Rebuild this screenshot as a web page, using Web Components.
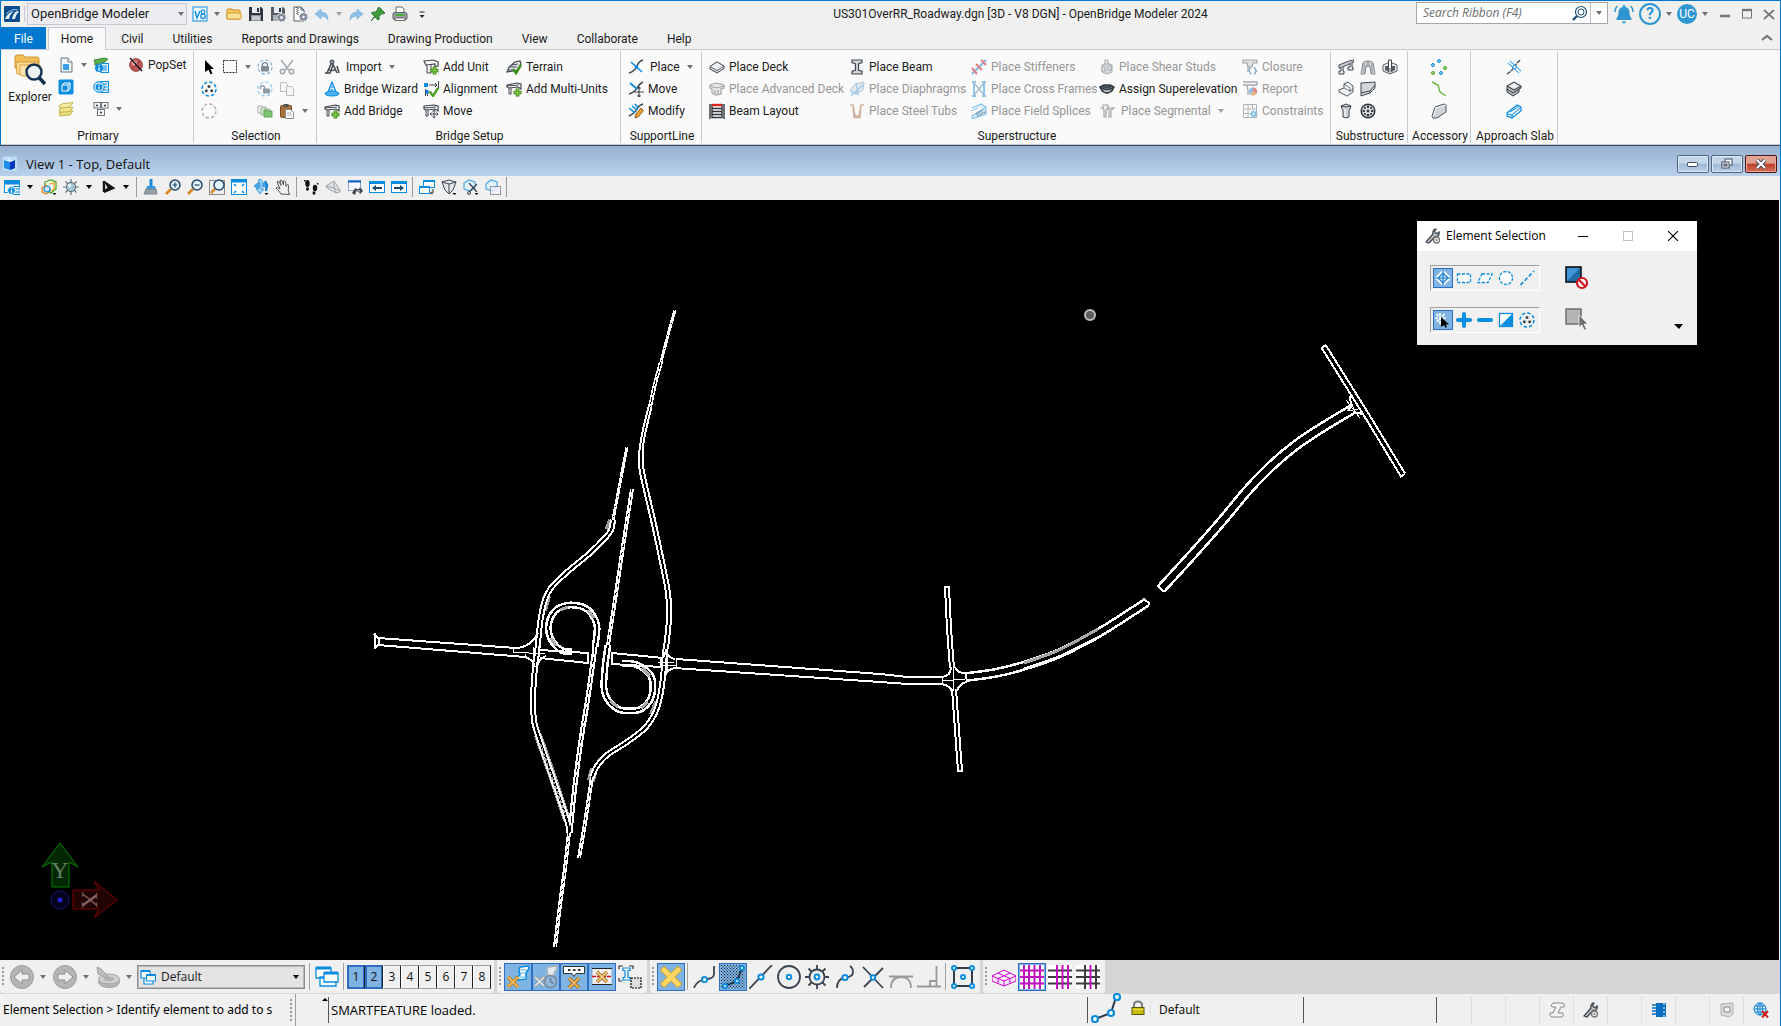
<!DOCTYPE html>
<html lang="en">
<head>
<meta charset="utf-8">
<title>OpenBridge Modeler</title>
<style>
  html, body {
    margin: 0;
    height: 100%;
    overflow: hidden;
    background: #f0f0f0;
    color: #1a1a1a;
    font-family: Roboto, "Open Sans", sans-serif;
    font-size: 12px;
    line-height: 16px;
  }
</style>
</head>
<body>
<bridge-app></bridge-app>

<script>
// icon markup by name, drawn on a square grid as large as the size asked for
const ICONS = {
  // ---- title bar ----
  logo: '<rect width="16" height="16" rx="1" fill="#0b4d8c"/><path d="M1 13Q4 6 10 5Q6 8 5 13M8 13Q9 7 13 5l2 1Q12 8 11 13" fill="#fff" opacity=".9"/><path d="M2 8Q8 2 14 4" stroke="#8cc6f0" fill="none"/>',
  v8: '<rect x="1" y="1" width="14" height="14" fill="#f4faff" stroke="#0a8ce0"/><path d="M3 5l2 7 3-7" fill="none" stroke="#0a8ce0" stroke-width="1.4"/><circle cx="11" cy="6" r="1.8" fill="none" stroke="#0a8ce0" stroke-width="1.2"/><circle cx="11" cy="10.3" r="2.3" fill="none" stroke="#0a8ce0" stroke-width="1.2"/>',
  folder: '<path d="M1 13V4q0-1 1-1h4l1 1h6q1 0 1 1v8z" fill="#f5c862" stroke="#c98a1c"/><path d="M1 13V7h14v5q0 1-1 1z" fill="#ffe09a" stroke="#d79a2b"/>',
  save: '<path d="M1 1h12l2 2v12H1z" fill="#2f353c"/><path d="M4 1h8v6H4z" fill="#e8ecf0"/><path d="M9 2h2v4H9z" fill="#2f353c"/><path d="M3 9h10v6H3z" fill="#8c949c"/><path d="M4 11h8M4 13h8" stroke="#fff"/>',
  saveset: '<path d="M1 1h12l2 2v12H1z" fill="#555c64"/><path d="M4 1h8v6H4z" fill="#e8ecf0"/><path d="M9 2h2v4H9z" fill="#2f353c"/><path d="M3 9h5v6H3z" fill="#a9b0b8"/><circle cx="11.5" cy="11.5" r="4.5" fill="#f0f0f0"/><circle cx="11.5" cy="11.5" r="2.6" fill="#eef" stroke="#7a8696" stroke-width="2"/><circle cx="11.5" cy="11.5" r="4" fill="none" stroke="#7a8696" stroke-dasharray="1.6 1.5"/>',
  docset: '<path d="M2 1h7l3 3v11H2z" fill="#fff" stroke="#555c64"/><path d="M5 1v8M6 2v8" stroke="#333" stroke-dasharray="1 1"/><path d="M9 1v3h3" fill="none" stroke="#555c64"/><circle cx="11.5" cy="11" r="4.5" fill="#f0f0f0"/><circle cx="11.5" cy="11" r="2.4" fill="#eef" stroke="#7a8696" stroke-width="2"/><circle cx="11.5" cy="11" r="4" fill="none" stroke="#7a8696" stroke-dasharray="1.6 1.5"/>',
  undo: '<path d="M1 8l6-5v3q7 0 7 8-2-4-7-4v3z" fill="#8cc0e6" stroke="#75aeda" stroke-width=".6"/>',
  redo: '<path d="M15 8L9 3v3q-7 0-7 8 2-4 7-4v3z" fill="#8cc0e6" stroke="#75aeda" stroke-width=".6"/>',
  pin: '<path d="M9 1l6 6-2 1-1-.5-3 3 .3 2.5-1.3 1-3-3-4 4 3.500-4.700-3-3 1-1.300 2.500.3 3-3-.5-1z" fill="#3d9a3d" stroke="#1e6b26" stroke-width=".8"/>',
  print: '<path d="M4 1h6l2 2v4H4z" fill="#fff" stroke="#666"/><rect x="1" y="6.500" width="14" height="7" rx="1.500" fill="#9aa1a8" stroke="#5c636a"/><rect x="3.500" y="8" width="9" height="2" fill="#4cae3a"/><path d="M3 12h10v2.500H3z" fill="#fff" stroke="#666"/>',
  customize: '<path d="M5.500 6h5" stroke="#222"/><path d="M5.500 9h5l-2.500 3z" fill="#222"/>',
  // ---- primary ----
  explorer: '<path d="M1 14V3q0-2 2-2h6l2 2h12q2 0 2 2v10z" fill="#f2bf58" stroke="#cf9430"/><path d="M2 8h22l-2 12H3z" fill="#fbdc96" stroke="#d79d3a"/><path d="M6 11h20v9q0 2-2 2H8q-2 0-2-2z" fill="#fde5ae" stroke="#d79d3a"/><circle cx="20" cy="18" r="7.500" fill="#e9f4fb" fill-opacity=".9" stroke="#12304f" stroke-width="2.400"/><path d="M25 23.500l6 6.500" stroke="#12304f" stroke-width="3.600"/>',
  doc: '<path d="M3 1h7l4 4v10H3z" fill="#eef4f9" stroke="#6d7780"/><path d="M10 1v4h4" fill="#fff" stroke="#6d7780"/><rect x="5" y="7" width="6" height="6" fill="#3aa0e6"/>',
  model: '<rect x=".5" y=".5" width="15" height="15" rx="1.500" fill="#0a8ce0"/><path d="M4 6h6v6H4zM4 6l2-2h6v6l-2 2M10 6l2-2" fill="none" stroke="#fff"/>',
  layers: '<path d="M1 12l4-3 10 1-3 4-10 1z" fill="#e9dc7c" stroke="#b5a640" stroke-width=".8"/><path d="M1 8.500l4-3 10 1-3 4-10 .8z" fill="#efe48c" stroke="#b5a640" stroke-width=".8"/><path d="M1 5l4-2.500 10-1-3 4.500-10 1z" fill="#f6eea4" stroke="#b5a640" stroke-width=".8"/>',
  levels: '<path d="M1 3l10-2 4 1-3 3-10 2z" fill="#57b04a" stroke="#33802a" stroke-width=".8"/><path d="M1 8l6-1" stroke="#33802a"/><rect x="8" y="6.500" width="7.500" height="9" fill="#e6f3fc" stroke="#0a8ce0"/><path d="M10 9h4M10 11h4M10 13h4" stroke="#0a8ce0"/><circle cx="6" cy="11" r="4" fill="#0a8ce0"/><path d="M6 10.500v3.500M6 8v1.300" stroke="#fff" stroke-width="1.300"/>',
  props: '<rect x="8" y="2.500" width="7.500" height="11" fill="#e6f3fc" stroke="#0a8ce0"/><path d="M10.500 5h4M10.500 8h4M10.500 11h4" stroke="#0a8ce0"/><circle cx="6" cy="8" r="5.300" fill="#bfe0f7" stroke="#0a8ce0"/><circle cx="6" cy="8" r="3.200" fill="#0a8ce0"/><path d="M6 7.500v3M6 5.300v1.200" stroke="#fff" stroke-width="1.300"/>',
  keys: '<g fill="#f7f7f7" stroke="#6d7780"><rect x="1" y="1.500" width="6.500" height="5.500"/><rect x="8.500" y="1.500" width="6.500" height="5.500"/><rect x="4.500" y="8.500" width="7" height="6"/></g><path d="M3 4.500h2M11 4.500h2M7 11.500h2" stroke="#333" stroke-width="1.500"/>',
  popset: '<circle cx="8" cy="8" r="6.300" fill="#c25a5a" stroke="#8d3434"/><circle cx="6.500" cy="6" r="2.600" fill="#e9a8a4"/><path d="M2 1l12 13" stroke="#111" stroke-width="1.300"/><path d="M4 12l8-8" stroke="#712" stroke-width=".8"/>',
  // ---- selection ----
  pointer: '<path d="M4 1l9 9H9.500l2 4.500-2 .8-2-4.600L4 13z" fill="#000"/>',
  marquee: '<rect x="1.500" y="1.500" width="13" height="12" fill="none" stroke="#222" stroke-dasharray="2 1"/>',
  lock: '<circle cx="8" cy="8" r="7" fill="none" stroke="#7fb2d4" stroke-width="1.200" stroke-dasharray="3.400 2.100"/><rect x="4" y="7" width="8" height="5.500" rx="1" fill="#7f8d99"/><path d="M5.500 7V5q2.500-3 5 0v2" fill="none" stroke="#7f8d99" stroke-width="1.400"/>',
  unlock: '<circle cx="8" cy="8" r="7" fill="none" stroke="#8cc8ef" stroke-width="1.200" stroke-dasharray="3.400 2.100"/><rect x="6" y="7.500" width="7" height="5" rx="1" fill="#8d99a3"/><path d="M3.500 8V6q2-3 4 0v2" fill="none" stroke="#8d99a3" stroke-width="1.400"/>',
  circledots: '<circle cx="8" cy="8" r="7" fill="none" stroke="#0a8ce0" stroke-width="1.500" stroke-dasharray="3.400 2.100"/><g fill="#3f4750"><circle cx="8" cy="5.500" r="1.500"/><circle cx="5.300" cy="9.700" r="1.500"/><circle cx="10.700" cy="9.700" r="1.500"/></g>',
  circledash: '<circle cx="8" cy="8" r="7" fill="none" stroke="#a4adb5" stroke-width="1.300" stroke-dasharray="3.400 2.100"/>',
  cut: '<g fill="none" stroke="#a3a9ae" stroke-width="1.500"><path d="M2 1l8.500 11M14 1L5.500 12"/><circle cx="3.500" cy="12.500" r="2.200"/><circle cx="12.500" cy="12.500" r="2.200"/></g>',
  copy: '<g fill="#f6f6f6" stroke="#b7bcc1"><path d="M1.500 1.500h5l2 2v7h-7z"/><path d="M7.500 5.500h5l2 2v7h-7z"/></g>',
  cascade: '<path d="M1 3h4l1 1h3v6H1z" fill="#f2f2f2" stroke="#a9b0a9"/><path d="M4 5h4l1 1h4v6H4z" fill="#cfe8cb" stroke="#9bb79a"/><path d="M7 7h3l1 1h4v6H7z" fill="#7cc46f" stroke="#69a35f"/>',
  paste: '<rect x="1.500" y="2.500" width="11" height="12" rx="1" fill="#a9713a" stroke="#7b4f25"/><rect x="4.500" y="1" width="5" height="3" fill="#555"/><path d="M6.500 6.500h5l3 3v6h-8z" fill="#fff" stroke="#8a8a8a"/><path d="M8 10h4M8 12h5" stroke="#aaa"/>',
  // ---- bridge setup ----
  import: '<g fill="none" stroke="#3f4750" stroke-width="1.500"><path d="M8 3L3 14M8 3l5 11M4 10q4 3 8 0"/><path d="M1 14h5L9 6M15 14l-2-7"/></g><circle cx="8" cy="3" r="2" fill="#8c949c" stroke="#3f4750"/>',
  wizard: '<path d="M8 1l4 10H4z" fill="#cfe9fb" stroke="#0a8ce0" stroke-width="1.200"/><path d="M1 12q7-4 14 0 0 3-7 3t-7-3z" fill="#4fb0ef" stroke="#0a8ce0"/><path d="M8 5v2M6 9h3" stroke="#0a8ce0"/>',
  addunit: '<path d="M1 2l9-1 5 2v4l-3 .5V5L3 6z" fill="#fff" stroke="#3f4750" stroke-width="1.200"/><path d="M4 6v8h4V6" fill="#eee" stroke="#3f4750"/><path d="M11.500 7.500v8M7.500 11.500h8" stroke="#2e7a12" stroke-width="3.600"/><path d="M11.500 8v7M8 11.500h7" stroke="#7cc242" stroke-width="2"/>',
  addbridge: '<path d="M1 4l10-2 4 1v5l-3-2-9 1-2-1z" fill="#fff" stroke="#3f4750" stroke-width="1.200"/><path d="M1 5l12-1M3 7v6h2V7" fill="none" stroke="#3f4750"/><path d="M11.500 7.500v8M7.500 11.500h8" stroke="#2e7a12" stroke-width="3.600"/><path d="M11.500 8v7M8 11.500h7" stroke="#7cc242" stroke-width="2"/>',
  movebridge: '<path d="M1 3l10-1 4 1v5l-3-2-9 1-2-1z" fill="#fff" stroke="#3f4750" stroke-width="1.200"/><path d="M1 5l12-1M3 7v6h2V7" fill="none" stroke="#3f4750"/><path d="M11 7v8M7 11h8M9.500 8.500L11 7l1.500 1.500M9.500 13.500L11 15l1.500-1.500M8.500 9.500L7 11l1.500 1.500M13.500 9.500L15 11l-1.500 1.500" fill="none" stroke="#3f4750"/>',
  alignment: '<rect x="1" y="2" width="4" height="4" fill="#0a8ce0"/><path d="M6 4h8M12 2l2 2-2 2M15.500 0v8M2.500 8v7M4.500 15v-4h4" fill="none" stroke="#3f4750"/><rect x="3" y="9" width="2.500" height="4" fill="#0a8ce0"/><path d="M7 11l3 4 5-8" fill="none" stroke="#4fa524" stroke-width="2.400"/>',
  terrain: '<path d="M1 13l2-5 6-5 5-1 1 3-3 6z" fill="#e8eaec" stroke="#3f4750" stroke-width="1.200"/><path d="M3 8h8M2 11h7M6 6l6-1" stroke="#3f4750"/><path d="M7 10l3 4 5-8" fill="none" stroke="#3f8f1a" stroke-width="2.600"/>',
  // ---- support line ----
  sl: '<path d="M1 14q6-2 8-7t6-6" fill="none" stroke="#3f4750" stroke-width="1.500"/><path d="M3 3l11 10" stroke="#0a8ce0" stroke-width="1.600"/><circle cx="8.500" cy="8" r="1.800" fill="#0a8ce0"/>',
  slmove: '<path d="M1 13q6-2 8-6t6-6" fill="none" stroke="#3f4750" stroke-width="1.500"/><path d="M2 2l7 6" stroke="#0a8ce0" stroke-width="1.800"/><path d="M11 6v10M6 11h10M9.500 7.500L11 6l1.500 1.500M9.500 14.500L11 16l1.500-1.500" fill="none" stroke="#3f4750" stroke-width="1.100"/>',
  slmodify: '<path d="M1 13q6-3 8-7t6-5" fill="none" stroke="#3f4750" stroke-width="1.500"/><path d="M1 5l6 5M4 3l5 4M7 1l3 4" stroke="#0a8ce0" stroke-width="1.500"/><path d="M7 15l1-4 5-6 2.500 2.500-5 6z" fill="#eda33c" stroke="#8a5a1c"/>',
  // ---- superstructure ----
  deck: '<path d="M1 7.500L8 3l7 4v2.500L8 14l-7-4z" fill="#d8dbde" stroke="#3f4750"/><path d="M1 7.500L8 3l7 4-7 4.500z" fill="#f1f2f3" stroke="#3f4750" stroke-width=".8"/>',
  advdeck: '<path d="M1 4l6-2 8 2v3l-3 1v5l-5 1-4-2V8L1 7z" fill="#e8e8e8" stroke="#a0a5aa" stroke-width="1.200"/><path d="M1 5l7 2 7-2M6 9v4M9 9v4" stroke="#a0a5aa" stroke-width="1.200" fill="none"/>',
  beamlayout: '<path d="M1 1v15M15 1v15M3 1v14M13 1v14" stroke="#2f353c" stroke-width="1.400"/><path d="M3 2h10" stroke="#d22" stroke-width="2.400"/><path d="M3 5.500h10M3 8.500h10M3 11.500h10M3 14.500h10" stroke="#2f353c" stroke-width="1.700"/>',
  beam: '<path d="M3 1h10v2.500L9.500 5v6l3.500 1.500V15H3v-2.500L6.500 11V5L3 3.500z" fill="#d3d6d9" stroke="#3f4750" stroke-width="1.200"/>',
  diaphragm: '<path d="M1 9l5-6 9-2-1 8-6 3z" fill="#e3e8ec" stroke="#b8c4cf"/><path d="M2 15L15 3M1 11l9 3M7 2l2 11" stroke="#9cc9ea" stroke-width="1.200"/>',
  tubs: '<path d="M1 2h3l2 11h4l2-11h3M4 2l1 12.500h6L12 2" fill="none" stroke="#cfb3a0" stroke-width="1.500"/>',
  stiffeners: '<path d="M1 15L15 1" stroke="#7dbce8" stroke-width="2.200"/><path d="M1 9l5 6M5 5l6 6M10 1l5 5" stroke="#e27f7f" stroke-width="2"/>',
  crossframes: '<path d="M3 1v14M13 1v14M1 1h4M11 1h4M1 15h4M11 15h4" stroke="#8cc4ea" stroke-width="2"/><path d="M3 2l10 12M13 2L3 14" stroke="#9fb7c8" stroke-width="1.200"/>',
  splices: '<path d="M1 5l9-4 5 3M1 13L15 4v7L1 16z" fill="#d6ecf9" stroke="#8cc4ea" stroke-width="1.200"/><path d="M5 11l7-4M6 13l8-4" stroke="#6e8fa6" stroke-width="1.700" stroke-dasharray="1.500 1"/><path d="M0 8l7-3" stroke="#8cc4ea"/>',
  studs: '<path d="M3 6l5-2 5 2v7l-5 2-5-2z" fill="#d9dbdd" stroke="#a4a8ac"/><path d="M6 1h3v4H6zM3 8h3v4H3zM9 7h3v4H9z" fill="#eceded" stroke="#a4a8ac"/>',
  superelev: '<path d="M1 6l4-2h6l4 2-2 4-4 2H7l-4-2z" fill="#8b9299" stroke="#2f353c" stroke-width="1.400"/><path d="M1 6q7 5 14 0M4 6h8" stroke="#2f353c" fill="none" stroke-width="1.300"/><path d="M5 10h6" stroke="#dfe3e6"/>',
  segmental: '<path d="M1 5h3l1 2v7h2V7l2-2V2H4v3M9 5l1 2v7h2V7l3-2H9V2" fill="#f1f1f1" stroke="#9ca0a4" stroke-width="1.100"/>',
  closure: '<path d="M1 1h14v3h-4l-1 4H6L5 4H1zM6 8v5" fill="#ddd" stroke="#a4a8ac" stroke-width="1.200"/><path d="M9 9q-2 0-1.500 2L7 12l1 1q0 2 1.500 2M12 9q2 0 1.500 2l1 1-1 1q0 2-1.500 2" fill="none" stroke="#7fa9c6" stroke-width="1.300"/>',
  report: '<path d="M1 1h14v3M1 4h4l1 5M6 9v5M5 4h10" fill="none" stroke="#a4a8ac" stroke-width="1.300"/><circle cx="11" cy="10.500" r="4" fill="#8fbfe4"/><path d="M11 10.500v-4a4 4 0 0 1 3.500 6z" fill="#e88b7c"/><path d="M11 10.500l3.500 2a4 4 0 0 1-6 1z" fill="#f0b97a"/>',
  constraints: '<g fill="none" stroke="#b0b3b6"><path d="M1.500 1.500h13v13h-13zM6 1v14M10.500 1v5M1 6h14M1 10.500h6"/></g><path d="M11.500 7v8M7.500 11h8" stroke="#8cc4ea" stroke-width="1.400"/><rect x="9.500" y="9" width="4" height="4" fill="#bfe0f5" stroke="#7fb8de"/>',
  // ---- substructure ----
  pierline: '<path d="M1 6l10-4 5-1v2L2 9H1z" fill="#ccd0d3" stroke="#3f4750"/><path d="M3 8v4H1v3h5v-3H5V8M12 4v4h-2v3h5V8h-1V4" fill="#e3e5e7" stroke="#3f4750"/>',
  arch: '<path d="M1 15l2-11q1-2 5-2t5 2l2 11h-4l-1-8H6l-1 8z" fill="#d5d9dd" stroke="#7d868e"/><path d="M4 4v10M12 4v10M7 2v6M9 2v6" stroke="#7d868e" stroke-width=".8"/>',
  footing: '<path d="M1 6l7-3 7 3v6l-7 3-7-3z" fill="#e5e7e9" stroke="#5c646c"/><path d="M3 7h10v4l-5 3-5-3z" fill="#555d65"/><path d="M6.500 1h3v9h-3z" fill="#fff" stroke="#3f4750"/><path d="M8 10v4" stroke="#fff"/>',
  abutment: '<path d="M1 9l5-2V3l4-2 5 4v6l-6 4-8-4z" fill="#f4f5f6" stroke="#4d555d"/><path d="M6 7l6 3 3-2M6 3l6 4v4" fill="none" stroke="#4d555d" stroke-width=".8"/>',
  wingwall: '<path d="M1 2l14-1v6l-5 5-9 3z" fill="#d4d7da" stroke="#3f4750"/><path d="M1 12l9-2 5-6M10 10v2" fill="none" stroke="#3f4750"/>',
  column: '<path d="M3 3l5-2 5 2-1 3-1 1v7l-3 1-3-1V7L4 6z" fill="#cfd3d6" stroke="#3f4750"/><path d="M3 3l5 1 5-1" stroke="#3f4750" fill="none"/><path d="M7 6v8" stroke="#fff"/>',
  piles: '<circle cx="8" cy="8" r="6.800" fill="#e1e3e5" stroke="#2f353c" stroke-width="1.400"/><g fill="#2f353c"><circle cx="8" cy="3.700" r="1.300"/><circle cx="8" cy="12.300" r="1.300"/><circle cx="3.700" cy="8" r="1.300"/><circle cx="12.300" cy="8" r="1.300"/><circle cx="5" cy="5" r="1.100"/><circle cx="11" cy="5" r="1.100"/><circle cx="5" cy="11" r="1.100"/><circle cx="11" cy="11" r="1.100"/><circle cx="8" cy="8" r="1.400"/></g>',
  points: '<g stroke-width="1"><g fill="#8fd0f5" stroke="#0a8ce0"><circle cx="8" cy="2" r="1.500"/><circle cx="2" cy="6" r="1.500"/><circle cx="10" cy="14" r="1.500"/></g><g fill="#a3d977" stroke="#4fa524"><circle cx="14" cy="9" r="1.500"/><circle cx="2" cy="14" r="1.500"/></g></g>',
  curve: '<path d="M1 1l6 3 2 7 6 4" fill="none" stroke="#6cb643" stroke-width="1.400"/>',
  parapet: '<path d="M1 13L4 4l9-3 2 1v7L6 15H2z" fill="#cfd2d5" stroke="#4d555d"/><path d="M4 4l1 1 10-3M5 5l-3 9" fill="none" stroke="#fff" stroke-width=".8"/>',
  slabline: '<path d="M1 15q6-4 8-8t6-6" fill="none" stroke="#3f4750" stroke-width="1.500" stroke-dasharray="4 1"/><path d="M4 2l11 10M2 4l11 10" stroke="#63b5ee" stroke-width="1.200"/><circle cx="8.500" cy="8" r="1.700" fill="#fff" stroke="#0a8ce0"/>',
  slab: '<path d="M1 5l7-4 7 4v2l-2 1v3l-6 4-6-4z" fill="#b5babf" stroke="#2f353c"/><path d="M1 5l7 4 7-4M1 8l6 4 6-4" fill="none" stroke="#2f353c"/><path d="M3 5l5-3 5 3-5 3z" fill="#eceeef"/>',
  slabpick: '<path d="M1 10L11 2l4 2v4L6 15l-5-2z" fill="#e4f3fd" stroke="#0a8ce0" stroke-width="1.200"/><path d="M2 11l4 1 9-8M6 12v3M4 9l9-6" fill="none" stroke="#0a8ce0"/>',
  // ---- top right ----
  search: '<circle cx="9" cy="7" r="5.500" fill="none" stroke="#1f4e79" stroke-width="1.200"/><circle cx="9" cy="7" r="3" fill="none" stroke="#1f4e79"/><path d="M5 11l-4 4" stroke="#1f4e79" stroke-width="2.400"/>',
  bell: '<path d="M10 1q1.500 0 1.500 2 4 1 4 6 0 4 2 5.500v1.500h-15v-1.500q2-1.500 2-5.500 0-5 4-6 0-2 1.500-2zM8 17.500h4q0 2-2 2t-2-2z" fill="#2e96d0"/><path d="M3.500 2q-2.500 2-2.500 6M16.500 2q2.500 2 2.500 6" fill="none" stroke="#2e96d0" stroke-width="1.500"/>',
  chevron: '<path d="M3 10l5-4 5 4" fill="none" stroke="#777" stroke-width="2.200"/>',
  min: '<path d="M3 10h10" stroke="#777" stroke-width="2.600"/>',
  max: '<rect x="3.500" y="4" width="9" height="8" fill="none" stroke="#777"/><path d="M3 4h10" stroke="#777" stroke-width="2.400"/>',
  close: '<path d="M3 4l10 9M13 4L3 13" stroke="#777" stroke-width="1.700"/>',
  // ---- view window ----
  viewcube: '<rect x=".5" y=".5" width="15" height="15" rx="2" fill="#c2def5" stroke="#a5c9e8"/><path d="M2 4l5-1 6 1v8l-5 2-6-2z" fill="#1f8df0"/><path d="M8 6l5-2v8l-5 2z" fill="#0a35c0"/><path d="M2 4l5-1 6 1-5 2z" fill="#e8f6ff"/>',
  viewattr: '<rect x=".5" y="1.500" width="15" height="12" fill="#f4faff" stroke="#0a8ce0"/><path d="M0 3.500h16" stroke="#0a8ce0" stroke-width="4"/><rect x="9" y="7.500" width="7" height="8" fill="#e6f3fc" stroke="#0a8ce0"/><path d="M11 10h4M11 13h4" stroke="#0a8ce0"/><circle cx="7.500" cy="11.500" r="4" fill="#0a8ce0" stroke="#fff"/><path d="M7.500 11v3M7.500 9v1.200" stroke="#fff" stroke-width="1.200"/>',
  display: '<path d="M4 3l6-2 5 2v7l-5 4-6-2z" fill="#fff" stroke="#4fa524" stroke-width="1.300"/><path d="M8 5l5-1v6l-3 2" fill="none" stroke="#e8b13c" stroke-width="1.500"/><path d="M1 9l4-3 4 3v3l-4 3-4-2z" fill="#fbe1b2" stroke="#df8b28" stroke-width="1.300"/><circle cx="6" cy="10" r="3" fill="#cce6f8" stroke="#0a8ce0" stroke-width="1.200"/><path d="M11.500 14h4l-2 2z" fill="#000"/>',
  bright: '<path d="M8 0v16M0 8h16M2.500 2.500l11 11M13.500 2.500l-11 11" stroke="#66727c" stroke-width="1.200"/><circle cx="8" cy="8" r="4.600" fill="#a4c6d8" stroke="#55646f"/><circle cx="6.500" cy="6.500" r="1.800" fill="#e9f6fb"/>',
  bing: '<path d="M4 2v11M4 13l9-4-6-4 2 4z" fill="#111" stroke="#111" stroke-width="2.400"/>',
  brush: '<path d="M8 0v8" stroke="#1b87d2" stroke-width="3"/><path d="M4 7h8l1 3H3z" fill="#2f9ae2"/><path d="M3 10h10l1 5H1z" fill="#99a2a9" stroke="#79828a"/>',
  zoomin: '<path d="M1 15l5-5" stroke="#d38727" stroke-width="2.600"/><circle cx="10" cy="6" r="5" fill="#e6f4fc" stroke="#24476b" stroke-width="1.500"/><path d="M10 3.500v5M7.500 6h5" stroke="#24476b" stroke-width="1.200"/>',
  zoomout: '<path d="M1 15l5-5" stroke="#d38727" stroke-width="2.600"/><circle cx="10" cy="6" r="5" fill="#e6f4fc" stroke="#24476b" stroke-width="1.500"/><path d="M7.500 6h5" stroke="#24476b" stroke-width="1.200"/>',
  zoomwin: '<rect x=".5" y="1.500" width="15" height="14" fill="none" stroke="#222" stroke-dasharray="1 1"/><path d="M2 14l4-4" stroke="#d38727" stroke-width="2.600"/><circle cx="10" cy="6" r="5" fill="#e6f4fc" stroke="#24476b" stroke-width="1.500"/>',
  fit: '<rect x=".5" y=".5" width="15" height="15" fill="#fff" stroke="#0a8ce0"/><path d="M0 2h16" stroke="#0a8ce0" stroke-width="3"/><path d="M3 5l2 2M13 5l-2 2M3 14l2-2M13 14l-2-2" stroke="#0a8ce0" stroke-width="1.600"/>',
  rotate: '<path d="M1 7l5-4v2q5-2 8 0l-1 3q-3-1-7 0v3z" fill="#4ba9ea" stroke="#1b87d2" stroke-width=".7"/><path d="M8 0q4 5 0 10h3l-4 5-4-5h2q4-4 0-9z" fill="#9ed3f6" stroke="#1b87d2" stroke-width=".7"/><path d="M12 2l2 4-1 6" fill="none" stroke="#1b87d2" stroke-width="2.400"/><path d="M11.500 14h4l-2 2z" fill="#000"/>',
  hand: '<path d="M6 15q-2-3-5-6 1-1.500 4 1L2 3q1-1.500 2 0l2 3.500L5 1.500q1-1 2 .5l1.500 4V2q1-1 2 .5l.5 5 1.500-2q1 0 1 1-1 6 1 9z" fill="#f2f2f2" stroke="#4d555d"/>',
  walk: '<g fill="#111"><ellipse cx="4.500" cy="4.500" rx="2.200" ry="3.500"/><ellipse cx="4.500" cy="10" rx="1.500" ry="1.800"/><ellipse cx="12" cy="9" rx="2.200" ry="3.300"/><ellipse cx="11" cy="14" rx="1.500" ry="1.700"/><path d="M1 1h1.500v1.500H1zM14 4h1.500v1.500H14z"/></g>',
  fly: '<path d="M1 7l8-5 6 9v2l-4 1-9-5z" fill="#e3e5e7" stroke="#9fa4a9"/><path d="M1 7l8 2 6 3M9 2v7l2 5" stroke="#9fa4a9" fill="none"/>',
  navigate: '<rect x="1.500" y="1.500" width="12" height="10" fill="#f4faff" stroke="#8fa8c8"/><path d="M1 2.500h13" stroke="#1560d0" stroke-width="2"/><path d="M5 14l3-5 2 1h2l1-2 3 4-3 3-1-2h-3l-1 3z" fill="#3f4750"/><path d="M9 12h4" stroke="#e3e5e7"/>',
  prev: '<rect x=".5" y="2.500" width="15" height="11" fill="#fff" stroke="#0a8ce0"/><path d="M0 3.500h16" stroke="#0a8ce0" stroke-width="3"/><path d="M3 9l4-3v2h6v2H7v2z" fill="#24476b"/>',
  next: '<rect x=".5" y="2.500" width="15" height="11" fill="#fff" stroke="#0a8ce0"/><path d="M0 3.500h16" stroke="#0a8ce0" stroke-width="3"/><path d="M13 9L9 6v2H3v2h6v2z" fill="#24476b"/>',
  copyview: '<rect x="4.500" y="1.500" width="11" height="7" fill="#fff" stroke="#0a8ce0"/><path d="M4 2h12" stroke="#0a8ce0" stroke-width="2"/><rect x=".5" y="7.500" width="10" height="7" fill="#fff" stroke="#0a8ce0"/><path d="M0 8h11" stroke="#0a8ce0" stroke-width="2"/><path d="M14 10v4h-2M13 12.500L11.500 14l1.500 1.500" fill="none" stroke="#333"/>',
  perspective: '<path d="M1 3l7-2 7 2-3 8-4 4-4-4z" fill="#e4e7ea" stroke="#3f4750"/><path d="M1 3l7 2 7-2M8 5v10" fill="none" stroke="#3f4750"/><path d="M11.500 14h4l-2 2z" fill="#000"/>',
  clip: '<path d="M1 4l5-3 6 2v6l-5 3-6-2z" fill="#e4f3fd" stroke="#49a7e4" stroke-width="1.200"/><path d="M6 4l8 9M14 5l-8 8" stroke="#3f4750" stroke-width="1.300"/><circle cx="6" cy="14" r="1.500" fill="none" stroke="#3f4750"/><path d="M11.500 14h4l-2 2z" fill="#000"/>',
  clipmask: '<path d="M1 5l5-4 6 2v4l-4 5-7-2z" fill="#e4f3fd" stroke="#49a7e4" stroke-width="1.200"/><rect x="5.500" y="7.500" width="10" height="8" fill="#eef" fill-opacity=".8" stroke="#444" stroke-dasharray="1 1"/>',
  // ---- dialog ----
  wrench: '<path d="M1 14L8 6q-1-3 2-5l1 .3L9.500 3l1 2 2 .5L14 4q1 3-2 4.500l-2 .2L4 15z" fill="#b9bfc4" stroke="#444c54" stroke-width="1.300"/><circle cx="11.500" cy="12" r="3" fill="#eee" stroke="#777" stroke-width="1.300"/><circle cx="11.500" cy="12" r="1" fill="#777"/>',
  individual: '<path d="M8 1l7 7-7 7-7-7z" fill="#cfe6f8" stroke="#fff" stroke-width="2"/><path d="M8 0v16M0 8h16" stroke="#1b7fd0" stroke-width="1.200"/><path d="M8 3l5 5-5 5-5-5z" fill="none" stroke="#1b7fd0" stroke-width="1.200"/>',
  block: '<rect x="1.500" y="4" width="13" height="8.500" fill="#fff" stroke="#0a8ce0" stroke-width="1.300" stroke-dasharray="3 1.500"/>',
  shape: '<path d="M5 4h10l-4 8.500H1z" fill="#fff" stroke="#0a8ce0" stroke-width="1.300" stroke-dasharray="3 1.500"/>',
  circle: '<circle cx="8" cy="8" r="6.500" fill="#fff" stroke="#0a8ce0" stroke-width="1.300" stroke-dasharray="3 1.500"/>',
  line: '<path d="M1.500 15L15 1" stroke="#0a8ce0" stroke-width="1.600" stroke-dasharray="4 2"/>',
  newsel: '<path d="M5 1v11M0 6h11M1.500 2l8 8M9.500 2l-8 8" stroke="#fff" stroke-width="1.700" stroke-dasharray="3 1"/><path d="M6 5l8 7.500H10.500l1.500 2.500-1.500.8L9 13l-3 2z" fill="#000"/>',
  plus: '<path d="M8 2v12M2 8h12" stroke="#0a8ce0" stroke-width="4" stroke-linecap="round"/>',
  minus: '<path d="M2 8h12" stroke="#0a8ce0" stroke-width="4" stroke-linecap="round"/>',
  invert: '<rect x="1.500" y="1.500" width="13" height="13" fill="#fff" stroke="#0a8ce0" stroke-width="1.300"/><path d="M15 1v14H1z" fill="#0a8ce0"/>',
  // ---- status bar ----
  padlock: '<path d="M4 8V5q0-3.500 4-3.500T12 5v3" fill="none" stroke="#7a7a7a" stroke-width="2"/><rect x="2" y="7.500" width="12" height="7" fill="#c8bd10" stroke="#5b560a"/><path d="M3 9.500h10" stroke="#e9e04e"/>',
  scroll: '<path d="M4 1h10q2 1 1 4h-3l-3 6h5q1 3-1 4H3q-3-1-2-4h3l3-6H3q-2-2 1-4z" fill="#f4f4f4" stroke="#888"/>',
  spring: '<rect x="5" y="1" width="10" height="14" fill="#0a6fc2"/><path d="M1 3h6M1 6h6M1 9h6M1 12h6" stroke="#0a6fc2" stroke-width="1.500"/><path d="M13 1v14" stroke="#fff" stroke-dasharray="2 2"/>',
  panel: '<path d="M2 2l12-1v11l-4 3-8-2z" fill="#dcdcdc" stroke="#b0b0b0"/><path d="M5 5h6v5H5z" fill="#f4f4f4" stroke="#888"/>',
  globe: '<circle cx="7" cy="7" r="6" fill="#e6f4fc" stroke="#0a7fd0"/><ellipse cx="7" cy="7" rx="2.600" ry="6" fill="none" stroke="#0a7fd0"/><path d="M1 7h12M2 4h10M2 10h10M7 1v12" stroke="#0a7fd0"/><path d="M9 9l6 6.500M15 9l-6 6.500" stroke="#d01818" stroke-width="2"/>',
  // ---- dialog, 24 grid ----
  deselect: '<rect x="1" y="1" width="15" height="15" fill="#3d94d6" stroke="#000" stroke-width="1.500"/><path d="M2 15L15 2v13z" fill="#1f6ba8"/><circle cx="17" cy="17" r="5" fill="#fff" stroke="#d3131c" stroke-width="2.200"/><path d="M13.500 13.500l7 7" stroke="#d3131c" stroke-width="2.200"/>',
  selectall: '<rect x="1" y="1" width="15" height="15" fill="#b5b5b5" stroke="#6d6d6d" stroke-width="1.500"/><path d="M14 7l9 9h-4l2.500 5-2.500 1-2-5-3 2.500z" fill="#6d6d6d" stroke="#f0f0f0" stroke-width=".8"/>',
  // ---- bottom bar, 24 grid ----
  back: '<circle cx="12" cy="12" r="11.500" fill="#b5b5b5" stroke="#9b9b9b"/><path d="M4 12l8-7v4h7v6h-7v4z" fill="#efefef" stroke="#8d8d8d"/>',
  forward: '<circle cx="12" cy="12" r="11.500" fill="#b5b5b5" stroke="#9b9b9b"/><path d="M20 12l-8-7v4H5v6h7v4z" fill="#efefef" stroke="#8d8d8d"/>',
  disc: '<ellipse cx="13" cy="17" rx="10.500" ry="5.500" fill="#b5b5b5" stroke="#a0a0a0"/><ellipse cx="13" cy="14" rx="10.500" ry="5" fill="#cecece" stroke="#a6a6a6"/><ellipse cx="13" cy="14" rx="5" ry="2.200" fill="#b0b0b0"/><path d="M1 2l4 2 8 8-2 1-9-4z" fill="#bdbdbd" stroke="#a0a0a0"/>',
  windows: '<g fill="#fff" stroke="#0a8ce0" stroke-width="1.300"><path d="M1 3h15v10H1zM5 12h16v9H5z"/><path d="M9 8h14v9H9z"/></g><path d="M1 3h15M9 8h14" stroke="#0a8ce0" stroke-width="3"/>',
  workset: '<g fill="#fff" stroke="#0a8ce0" stroke-width="1.200"><path d="M1 2h9v7H1zM4 9h9v6H4z"/><path d="M6.500 6h9v6h-9z"/></g><path d="M1 2h9M6 6h10" stroke="#0a8ce0" stroke-width="2"/>',
  snapbolt: '<path d="M13 6q0-4 2-4l7-1q2 1 0 4l-2 3v3q1 1 0 3l-8 1q-2-1-1-3l3-2z" fill="#fff" stroke="#0a8ce0" stroke-width="1.600"/><path d="M14 5h7M14 8h6M12 12h8" stroke="#4fb0ef" stroke-width="1.200"/><path d="M2 12l10 10M12 12L2 22" stroke="#c07c14" stroke-width="3.400"/><path d="M2 12l10 10M12 12L2 22" stroke="#f4c36b" stroke-width="1.600"/>',
  snaphist: '<path d="M13 5q0-3 2-3l7-1q2 1 0 4l-2 3v2l-9 3 3-4z" fill="#e6e9ec" stroke="#a9b2ba" stroke-width="1.300"/><circle cx="16.500" cy="16.500" r="6" fill="#8fb8da" stroke="#78899a" stroke-width="1.600"/><path d="M16.500 13V16.500l3 2" fill="none" stroke="#667b8c" stroke-width="1.500"/><path d="M1 12l9 9M10 12l-9 9" stroke="#8c969e" stroke-width="3.200"/><path d="M1 12l9 9M10 12l-9 9" stroke="#e8ecef" stroke-width="1.600"/>',
  snapnote: '<path d="M1.500 1.500h21v7H14l-2 3-2-3H1.500z" fill="#fff" stroke="#333"/><path d="M6 5h2.500M11 5h2.500M16 5h2.500" stroke="#333" stroke-width="2.200"/><path d="M7 13l10 10M17 13L7 23" stroke="#a86b10" stroke-width="3.400"/><path d="M7 13l10 10M17 13L7 23" stroke="#f4c36b" stroke-width="1.600"/>',
  snapline: '<rect x="2.500" y="3.500" width="19" height="16" fill="#f0f0f0"/><path d="M2 3.500h20M2 19.500h20" stroke="#222"/><path d="M2 11.500h20" stroke="#d3131c" stroke-width="1.500" stroke-dasharray="4 1"/><path d="M7 7l10 10M17 7L7 17" stroke="#a86b10" stroke-width="3.200"/><path d="M7 7l10 10M17 7L7 17" stroke="#f8d79a" stroke-width="1.500"/>',
  snaptext: '<path d="M1 4V1h4M11 1h4v3M1 13v3h3" fill="none" stroke="#333" stroke-width="1.200"/><path d="M5 3h7v2.500H10v7h2V15H5v-2.500h2v-7H5z" fill="#fff" stroke="#0a8ce0" stroke-width="1.200"/><rect x="13" y="13" width="10" height="10" fill="#ddd" stroke="#000" stroke-width="1.200" stroke-dasharray="2 1"/>',
  bigx: '<path d="M3 3l18 18M21 3L3 21" stroke="#caa033" stroke-width="6.500"/><path d="M3.500 3.500l17 17M20.500 3.500l-17 17" stroke="#ffd765" stroke-width="4.600"/>',
  near: '<path d="M1 23q2-5 6-7l8-2q6-1 6-5V1" fill="none" stroke="#3a4450" stroke-width="1.800"/><circle cx="11.500" cy="14.500" r="2.600" fill="#fff" stroke="#0a8ce0" stroke-width="2"/>',
  keypt: '<defs><pattern id="dots" width="3" height="3" patternUnits="userSpaceOnUse"><rect width="1" height="1" fill="#14202c"/><rect x="1.500" y="1.500" width="1" height="1" fill="#14202c"/></pattern></defs><rect width="24" height="24" fill="url(#dots)"/><path d="M4 21l12-5 5-13" fill="none" stroke="#1f2b38" stroke-width="1.800"/><g fill="#fff" stroke="#0a8ce0" stroke-width="2"><circle cx="4" cy="21" r="2"/><circle cx="16" cy="16" r="2"/><circle cx="21" cy="3" r="2"/></g>',
  midpt: '<path d="M0 24L23 0" stroke="#3a4450" stroke-width="1.800"/><circle cx="12" cy="12" r="2.600" fill="#fff" stroke="#0a8ce0" stroke-width="2"/>',
  center: '<circle cx="12" cy="12" r="11" fill="none" stroke="#3a4450" stroke-width="1.800"/><circle cx="12" cy="12" r="2.200" fill="#fff" stroke="#0a8ce0" stroke-width="2"/>',
  origin: '<circle cx="12" cy="12" r="7.500" fill="none" stroke="#3a4450" stroke-width="1.800"/><path d="M12 0v4M12 20v4M0 12h4M20 12h4M3.500 3.500l3 3M17.500 17.500l3 3M20.500 3.500l-3 3M6.500 17.500l-3 3" stroke="#3a4450" stroke-width="1.800"/><circle cx="12" cy="12" r="2.400" fill="#fff" stroke="#0a8ce0" stroke-width="2"/>',
  bisector: '<path d="M4 23q0-9 8-10.500Q20 12 20 7q0-4-3-6" fill="none" stroke="#3a4450" stroke-width="1.800"/><circle cx="12" cy="12.500" r="2.600" fill="#fff" stroke="#0a8ce0" stroke-width="2"/>',
  intersect: '<path d="M2 2l20 21M22 3L3 22" stroke="#3a4450" stroke-width="1.800"/><circle cx="12" cy="12.500" r="2.200" fill="#fff" stroke="#0a8ce0" stroke-width="2"/>',
  tangent: '<path d="M0 11.500h24M2 23q0-11 10-11t10 11" fill="none" stroke="#999" stroke-width="1.800"/>',
  perp: '<path d="M0 21.500h24M19.500 1v20M13 21v-5h6" fill="none" stroke="#999" stroke-width="1.800"/>',
  multisnap: '<rect x="3" y="3" width="18" height="18" fill="none" stroke="#1f2b38" stroke-width="1.800"/><g fill="#fff" stroke="#0a8ce0" stroke-width="2"><circle cx="3" cy="3" r="2"/><circle cx="21" cy="3" r="2"/><circle cx="3" cy="21" r="2"/><circle cx="21" cy="21" r="2"/><circle cx="12" cy="12" r="2"/></g>',
  mesh: '<g fill="#fdf0fd" stroke="#c800c8"><path d="M0 11l12-6 12 6v5l-12 5-12-5z"/><path d="M0 11l12 5 12-5M12 16v5M6 8l12 5.500v5M18 8L6 13.500v5" fill="none"/></g>',
  gridall: '<rect width="24" height="24" fill="#fff"/><path d="M9 0v24M14.500 0v24M20 0v24M4 0v24M0 5.500h24M0 12h24M0 18.500h24" stroke="#c010c0" stroke-width="2"/>',
  gridcol: '<rect width="24" height="24" fill="#fff"/><path d="M0 5.500h24M0 12h24M0 18.500h24" stroke="#3c3c3c" stroke-width="2"/><path d="M9 0v24M14.500 0v24M20 0v24" stroke="#c010c0" stroke-width="2"/>',
  gridone: '<rect width="24" height="24" fill="#fff"/><path d="M0 5.500h24M0 12h24M0 18.500h24M9 0v24M20 0v24" stroke="#3c3c3c" stroke-width="2"/><path d="M14.500 0v24" stroke="#c010c0" stroke-width="2"/>',
  snapmode: '<path d="M4 26l16-6L25 4" fill="none" stroke="#2b3642" stroke-width="2"/><g fill="#fff" stroke="#0a8ce0" stroke-width="2.200"><circle cx="4" cy="26" r="3"/><circle cx="20" cy="20" r="3"/><circle cx="26" cy="4" r="3"/></g>'
};

class SvgIcon extends HTMLElement {
  connectedCallback() {
    const size = this.getAttribute('size') || 16;
    this.attachShadow({mode: 'open'}).innerHTML = `
      <style>
        :host { display: inline-flex; flex: none; }
        svg { display: block; }
      </style>
      <svg width="${size}" height="${size}" viewBox="0 0 ${size} ${size}" aria-hidden="true">${ICONS[this.getAttribute('name')] || ''}</svg>
    `;
  }
}
customElements.define('svg-icon', SvgIcon);

class DropCaret extends HTMLElement {
  connectedCallback() {
    this.attachShadow({mode: 'open'}).innerHTML = `
      <style>
        :host { display: inline-flex; align-items: center; justify-content: center; flex: none; width: var(--caret-width, 14px); color: #707070; }
        i { border: 3px solid transparent; border-top: 4px solid currentColor; border-bottom: 0; }
      </style>
      <i></i>
    `;
  }
}
customElements.define('drop-caret', DropCaret);

// icon button with an optional text and an optional drop-down arrow
class ToolButton extends HTMLElement {
  connectedCallback() {
    const icon = this.getAttribute('icon');
    const size = this.getAttribute('size') || 16;
    const tip = this.getAttribute('tip') || icon;
    const text = this.textContent.trim();
    this.attachShadow({mode: 'open'}).innerHTML = `
      <style>
        :host { display: flex; flex: none; height: 22px; }
        button {
          display: flex; align-items: center; gap: 4px;
          margin: 0; padding: 0 3px; border: 0; background: none;
          color: inherit; font: inherit; white-space: nowrap;
        }
        button.split { gap: 6px; }
        button:disabled { color: #969696; }
        :host([size="24"]) { height: 28px; }
        :host([size="24"]) button { padding: 0 2px; }
        :host([on]) button { background: #7fb4e2; box-shadow: inset 0 0 0 1px #2e6cc4; }
        :host([dark]) drop-caret { color: #000; }
        :host([off]) drop-caret { color: #a0a0a0; }
      </style>
      <button type="button" ${text ? '' : `aria-label="${tip}"`} ${text && this.hasAttribute('menu') ? 'class="split"' : ''} ${this.hasAttribute('off') ? 'disabled' : ''}>
        <svg-icon name="${icon}" size="${size}"></svg-icon>${text ? '<slot></slot>' : ''}
      </button>
      ${this.hasAttribute('menu') ? '<drop-caret></drop-caret>' : ''}
    `;
  }
}
customElements.define('tool-button', ToolButton);

class ComboBox extends HTMLElement {
  connectedCallback() {
    const value = this.getAttribute('value');
    this.attachShadow({mode: 'open'}).innerHTML = `
      <style>
        :host { display: grid; align-items: center; flex: none; height: 22px; box-sizing: border-box; }
        select, svg-icon, drop-caret { grid-area: 1 / 1; }
        select {
          appearance: none; width: 100%; height: 100%; margin: 0; padding: 0 16px 0 3px;
          border: 1px solid #c9c9d6; border-radius: 0; background: #ececf0; color: inherit; font: inherit;
        }
        svg-icon { margin-left: 3px; pointer-events: none; }
        drop-caret { justify-self: end; pointer-events: none; }
        :host([icon]) select { padding-left: 23px; border: 1px solid #8c8c8c; background: #e3e3e3; box-shadow: inset 0 0 0 1px #b9b9b9; }
        :host([icon]) drop-caret { color: #000; margin-right: 2px; }
      </style>
      <select aria-label="${this.getAttribute('label')}"><option>${value}</option></select>
      ${this.hasAttribute('icon') ? `<svg-icon name="${this.getAttribute('icon')}"></svg-icon>` : ''}
      <drop-caret></drop-caret>
    `;
  }
}
customElements.define('combo-box', ComboBox);

class TitleBar extends HTMLElement {
  connectedCallback() {
    this.attachShadow({mode: 'open'}).innerHTML = `
      <style>
        :host { display: flex; align-items: center; height: 26px; padding-left: 3px; --caret-width: 12px; }
        .sep { width: 1px; height: 16px; margin: 0 2px 0 4px; background: #c9c9d6; }
        combo-box { width: 160px; margin-right: 2px; font-size: 13px; }
        h1 { flex: 1; margin: 0; padding-left: 192px; font-size: 12px; font-weight: normal; text-align: center; white-space: nowrap; }
        .search { display: flex; width: 192px; height: 22px; box-sizing: border-box; border: 1px solid #a6a6a6; background: #fff; margin: 0 4px 2px 0; }
        .search input { flex: 1; min-width: 0; border: 0; padding: 0 0 2px 6px; background: none; font: italic 12px "Open Sans", sans-serif; }
        .search input::placeholder { color: #6e6e6e; opacity: 1; }
        .search button, .round { display: flex; align-items: center; justify-content: center; margin: 0; padding: 0; border: 0; background: none; font: inherit; }
        .search .go { width: 20px; }
        .search .more { width: 17px; border-left: 1px solid #b9b9c9; }
        .bell { width: 24px; height: 24px; }
        .help { width: 22px; height: 22px; box-sizing: border-box; margin-left: 3px; border: 2px solid #2e96d0; border-radius: 50%; color: #2e96d0; font-size: 16px; font-weight: bold; }
        .user { width: 20px; height: 20px; border-radius: 50%; background: #2e96d0; color: #fff; margin-left: 1px; }
        drop-caret.wide { width: 15px; }
        .first { margin-left: 2px; }
      </style>
      <svg-icon name="logo"></svg-icon>
      <span class="sep"></span>
      <combo-box label="Workflow" value="OpenBridge Modeler"></combo-box>
      <tool-button icon="v8" tip="Iterate" menu></tool-button>
      <tool-button icon="folder" tip="Open"></tool-button>
      <tool-button icon="save" tip="Save"></tool-button>
      <tool-button icon="saveset" tip="Save settings"></tool-button>
      <tool-button icon="docset" tip="Compress"></tool-button>
      <tool-button icon="undo" tip="Undo" off menu></tool-button>
      <tool-button icon="redo" tip="Redo" off></tool-button>
      <tool-button icon="pin" tip="Pin"></tool-button>
      <tool-button icon="print" tip="Print"></tool-button>
      <tool-button icon="customize" tip="Customize"></tool-button>
      <h1>US301OverRR_Roadway.dgn [3D - V8 DGN] - OpenBridge Modeler 2024</h1>
      <div class="search">
        <input type="text" aria-label="Search Ribbon" placeholder="Search Ribbon (F4)">
        <button class="go" type="button" aria-label="Search"><svg-icon name="search"></svg-icon></button>
        <button class="more" type="button" aria-label="Search options"><drop-caret></drop-caret></button>
      </div>
      <button class="round bell" type="button" aria-label="Notifications"><svg-icon name="bell" size="20"></svg-icon></button>
      <button class="round help" type="button">?</button><drop-caret class="wide"></drop-caret>
      <button class="round user" type="button">UC</button><drop-caret class="wide"></drop-caret>
      <tool-button class="first" icon="min" tip="Minimize"></tool-button>
      <tool-button icon="max" tip="Maximize"></tool-button>
      <tool-button icon="close" tip="Close"></tool-button>
    `;
  }
}
customElements.define('title-bar', TitleBar);

class RibbonTabs extends HTMLElement {
  connectedCallback() {
    const tabs = ['File', 'Home', 'Civil', 'Utilities', 'Reports and Drawings', 'Drawing Production', 'View', 'Collaborate', 'Help'];
    this.attachShadow({mode: 'open'}).innerHTML = `
      <style>
        :host { display: flex; height: 22px; border-bottom: 1px solid #c9c9d6; padding-right: 2px; }
        nav { display: flex; flex: 1; gap: 1px; }
        button { margin: 0; padding: 1px 14px 0; border: 0; background: none; color: inherit; font: inherit; }
        .file { background: #0078d0; color: #fff; padding: 1px 13px 0; margin-right: 1px; }
        .home { height: 23px; padding: 0 12px; border: 1px solid #c9c9d6; border-bottom: 0; background: #fafafa; }
      </style>
      <nav>${tabs.map(t => `<button type="button" class="${t.split(' ')[0].toLowerCase()}">${t}</button>`).join('')}</nav>
      <tool-button icon="chevron" tip="Collapse ribbon"></tool-button>
    `;
  }
}
customElements.define('ribbon-tabs', RibbonTabs);

class RibbonGroup extends HTMLElement {
  connectedCallback() {
    this.attachShadow({mode: 'open'}).innerHTML = `
      <style>
        :host { display: flex; flex-direction: column; flex: none; box-sizing: border-box; margin: 1px 0; border-right: 1px solid #c9c9d6; }
        div { display: flex; height: 71px; padding: 5px 0 0 4px; box-sizing: border-box; }
        :host([center]) div { justify-content: center; padding-left: 0; }
        :host([raised]) div { padding-top: 3px; padding-bottom: 2px; }
        span { padding-left: 2px; text-align: center; line-height: 28px; height: 22px; }
      </style>
      <div><slot></slot></div>
      <span>${this.getAttribute('label')}</span>
    `;
  }
}
customElements.define('ribbon-group', RibbonGroup);

// groups of the Home tab: [label, width, flags, columns], a column is [width, buttons]
const HOME = [
  ['Primary', 193, 'raised', [
    [35, ['doc||menu', 'model', 'layers']],
    [35, ['levels', 'props', 'keys||menu']],
    [60, ['popset|PopSet']]]],
  ['Selection', 123, '', [
    [21, ['pointer', 'circledots', 'circledash']],
    [35, ['marquee||menu']],
    [22, ['lock||off', 'unlock||off', 'cascade||off']],
    [36, ['cut||off', 'copy||off', 'paste||menu']]]],
  ['Bridge Setup', 304, '', [
    [99, ['import|Import|menu', 'wizard|Bridge Wizard', 'addbridge|Add Bridge']],
    [83, ['addunit|Add Unit', 'alignment|Alignment', 'movebridge|Move']],
    [112, ['terrain|Terrain', 'addbridge|Add Multi-Units']]]],
  ['SupportLine', 81, '', [
    [70, ['sl|Place|menu', 'slmove|Move', 'slmodify|Modify']]]],
  ['Superstructure', 629, '', [
    [140, ['deck|Place Deck', 'advdeck|Place Advanced Deck|off', 'beamlayout|Beam Layout']],
    [122, ['beam|Place Beam', 'diaphragm|Place Diaphragms|off', 'tubs|Place Steel Tubs|off']],
    [128, ['stiffeners|Place Stiffeners|off', 'crossframes|Place Cross Frames|off', 'splices|Place Field Splices|off']],
    [143, ['studs|Place Shear Studs|off', 'superelev|Assign Superelevation', 'segmental|Place Segmental|off menu']],
    [90, ['closure|Closure|off', 'report|Report|off', 'constraints|Constraints|off']]]],
  ['Substructure', 77, '', [
    [22, ['pierline', 'abutment', 'column']],
    [22, ['arch', 'wingwall', 'piles']],
    [22, ['footing']]]],
  ['Accessory', 63, 'center', [[22, ['points', 'curve', 'parapet']]]],
  ['Approach Slab', 87, 'center', [[22, ['slabline', 'slab', 'slabpick']]]]
];

class HomeRibbon extends HTMLElement {
  connectedCallback() {
    const button = b => {
      const [icon, text = '', flags = ''] = b.split('|');
      return `<tool-button icon="${icon}" ${flags}>${text}</tool-button>`;
    };
    this.attachShadow({mode: 'open'}).innerHTML = `
      <style>
        :host { display: flex; height: 94px; background: #fafafa; border-bottom: 1px solid #c9c9d6; }
        .col { display: flex; flex-direction: column; flex: none; }
        .explorer {
          display: flex; flex-direction: column; align-items: center; gap: 3px; width: 50px;
          padding: 0; border: 0; background: none; color: inherit; font: inherit;
        }
      </style>
      ${HOME.map(([label, width, flags, cols]) => `
        <ribbon-group label="${label}" ${flags} style="width:${width}px">
          ${label === 'Primary' ? '<button class="explorer" type="button"><svg-icon name="explorer" size="32"></svg-icon>Explorer</button>' : ''}
          ${cols.map(([w, items]) => `<div class="col" style="width:${w}px">${items.map(button).join('')}</div>`).join('')}
        </ribbon-group>`).join('')}
    `;
  }
}
customElements.define('home-ribbon', HomeRibbon);

class ViewTitle extends HTMLElement {
  connectedCallback() {
    this.attachShadow({mode: 'open'}).innerHTML = `
      <style>
        :host {
          display: flex; align-items: center; gap: 2px; height: 31px; padding: 5px 3px 0 2px; box-sizing: border-box;
          border-top: 1px solid #3b4652; background: linear-gradient(#98b1d0, #b9d1ea); color: #111;
          font-family: "Open Sans", sans-serif; font-size: 13px;
        }
        slot { display: block; flex: 1; margin-left: 6px; }
        button {
          display: flex; align-items: center; justify-content: center; width: 32px; height: 18px; padding: 0;
          border: 1px solid #50657e; border-radius: 2px;
          background: linear-gradient(#c3d6ea 45%, #9fb9d6 50%, #b9d1ea); box-shadow: inset 0 0 0 1px #dbe8f5;
        }
        button.close { border-color: #4a1514; background: linear-gradient(#e0a190 45%, #bd3f28 50%, #d3705a); box-shadow: inset 0 0 0 1px #e3a99b; }
      </style>
      <svg-icon name="viewcube"></svg-icon>
      <slot></slot>
      <button type="button" aria-label="Minimize view"><svg width="12" height="8"><rect x=".5" y="2.500" width="10" height="4" rx="1" fill="#fff" stroke="#414a5c"/></svg></button>
      <button type="button" aria-label="Restore view"><svg width="12" height="11"><rect x="4" y="1" width="7" height="6" fill="#fff" stroke="#414a5c"/><rect x="1" y="4" width="7" height="6" fill="#fff" stroke="#414a5c"/><rect x="3" y="6" width="3" height="2" fill="#9db6d2" stroke="#414a5c"/></svg></button>
      <button type="button" class="close" aria-label="Close view"><svg width="12" height="10"><path d="M2 1l8 8M10 1L2 9" stroke="#414a5c" stroke-width="4"/><path d="M2 1l8 8M10 1L2 9" stroke="#fff" stroke-width="2"/></svg></button>
    `;
  }
}
customElements.define('view-title', ViewTitle);

class ViewTools extends HTMLElement {
  connectedCallback() {
    const items = ['viewattr menu', 'display', 'bright menu', 'bing menu', '-',
      'brush', 'zoomin', 'zoomout', 'zoomwin', 'fit', 'rotate', 'hand', '-',
      'walk', 'fly', 'navigate', 'prev', 'next', '-',
      'copyview', 'perspective', 'clip', 'clipmask', '-'];
    this.attachShadow({mode: 'open'}).innerHTML = `
      <style>
        :host { display: flex; align-items: center; height: 24px; padding: 0 0 2px 1px; box-sizing: border-box; }
        i { width: 1px; height: 20px; margin: 0 3px 0 2px; background: #9a9a9a; }
        tool-button[menu] { width: 37px; }
      </style>
      ${items.map(t => t === '-' ? '<i></i>' : `<tool-button dark ${t.includes('menu') ? 'menu' : ''} icon="${t.split(' ')[0]}"></tool-button>`).join('')}
    `;
  }
}
customElements.define('view-tools', ViewTools);

// road centre lines: [outer width, inner width, points, inner dash]
const ROADS = [
  [3, 1, [[675, 310], [668, 335], [661, 362]], '1 12'],
  [4, 1, [[661, 362], [655, 384], [650, 407]], '7 2'],
  [5, 1, [[650, 407], [644, 432], [641, 450]]],
  [6, 2, [[641, 450], [641, 463], [643, 477], [653, 520], [661, 557], [668, 593], [669, 617], [667, 640], [665, 653], [663, 677], [660, 697], [655, 713], [645, 728], [627, 742], [607, 755], [597, 766], [592, 777]]],
  [4, 1, [[592, 777], [590, 790], [585, 823], [579, 858]], '3 5'],
  [3, 1, [[627, 447], [620, 483], [613, 520]], '1 9'],
  [6, 2, [[613, 520], [611, 530], [605, 538], [590, 553], [566, 573], [551, 588], [545, 600], [541, 617], [539, 633], [537, 653], [535, 667], [533, 700], [534, 720], [537, 732], [551, 773], [567, 820], [569, 833]]],
  [4, 1, [[569, 833], [565, 868], [560, 905], [555, 947]], '3 5'],
  [4, 1, [[632, 489], [624, 540], [615, 600], [608, 645]], '3 5'],
  [7, 2, [[608, 645], [605, 667], [604, 688], [608, 700], [618, 709], [629, 711], [641, 709], [650, 700], [653, 687], [651, 676], [643, 668], [634, 664], [622, 663]]],
  [7, 2, [[572, 652], [563, 651], [555, 645], [549, 634], [549, 622], [555, 611], [564, 606], [572, 605], [583, 607], [592, 614], [597, 627], [595, 647]]],
  [5, 1, [[595, 647], [588, 697], [581, 740], [575, 785], [570, 833]], '7 3']
];
const WIDE_ROADS = [
  [10, 5, [[966, 677], [995, 673], [1023, 666], [1060, 653], [1100, 632], [1124, 617], [1147, 602]]],
  [11, 6, [[1161, 589], [1192, 555], [1222, 521], [1247, 491], [1270, 467], [1296, 445], [1323, 427], [1353, 409]]],
  [7, 3, [[1324, 347], [1364, 411], [1403, 475]]],
  [6, 2, [[947, 587], [949, 627], [952, 668]]],
  [6, 2, [[954, 689], [957, 730], [960, 771]]]
];

// Catmull-Rom spline through the points as an SVG path
function smooth(p) {
  let d = `M${p[0]}`;
  for (let i = 0; i < p.length - 1; i++) {
    const a = p[i - 1] || p[i], b = p[i], c = p[i + 1], e = p[i + 2] || c;
    d += `C${b[0] + (c[0] - a[0]) / 6},${b[1] + (c[1] - a[1]) / 6} ${c[0] - (e[0] - b[0]) / 6},${c[1] - (e[1] - b[1]) / 6} ${c}`;
  }
  return d;
}

class RoadwayDrawing extends HTMLElement {
  connectedCallback() {
    const outer = r => `<path d="${smooth(r[2])}" stroke="#fff" stroke-width="${r[0]}"/>`;
    const inner = r => `<path d="${smooth(r[2])}" stroke="#000" stroke-width="${r[1]}" ${r[3] ? `stroke-dasharray="${r[3]}"` : ''}/>`;
    this.attachShadow({mode: 'open'}).innerHTML = `
      <style>
        :host { display: block; background: #000; overflow: hidden; }
        svg { display: block; width: 100%; height: 100%; }
        text { font-family: "Liberation Serif", serif; font-size: 24px; text-anchor: middle; }
      </style>
      <svg viewBox="0 200 1779 760" preserveAspectRatio="xMinYMin meet">
        <g fill="none" shape-rendering="crispEdges">
          <path d="M538 735l14 40 15 45M612 521l-4 9M658 702l-5 13M594 769l-3 12M547 596l-4 14" stroke="#9a9a9a" stroke-width="8"/>
          ${ROADS.map(outer).join('')}${ROADS.map(inner).join('')}
          ${WIDE_ROADS.map(outer).join('')}${WIDE_ROADS.map(inner).join('')}
          <path d="M540 744l12 34 14 38" stroke="#aaa" stroke-width="2" stroke-dasharray="3 2"/>
          <path d="${smooth([[1024, 663], [1059, 650], [1098, 629]])}" stroke="#a8a8a8" stroke-width="3"/>
          <path d="${smooth([[1024, 669], [1061, 656], [1101, 636]])}" stroke="#fff" stroke-width="3"/>
          <g stroke="#fff" stroke-width="2">
            <path d="M374 634l4 4 138 10q15-1 22-15M374 649l4-4 147 12q8 2 10 10M375 633v16M379 637v9"/>
            <path d="M540 650l48 3v10l-48-5M663 658l-51-5v11l49 3"/>
            <path d="M540 650q-2 0-1-4M546 656q-7 3-9 10"/>
            <path d="M675 659q-7-1-9-8-2 8-6 8M675 668q-8 1-10 8M676 659l204 15 28 3h34M674 668l206 14 28 2h34"/>
            <path d="M942 677q9-1 9-10M955 667q2 6 10 6M942 684q9 2 10 8M957 691q2-7 9-9"/>
            <path d="M1144 599l6 5M1158 586l6 6M1321 348l5-3M1400 477l5-3M944 587h6M957 771h6"/>
            <path d="M1350 396l1 10-3 5M1353 412l10 2 5 8"/>
          </g>
          <path d="M513 649v3l32 2M525 654v4M533 647v14M660 659v6l16 1v-8M658 662h16M667 652v18M942 677v7M942 681l23-2v-5M953 667v24M1350 398l4 12M1348 411l10-2M1346 400l14 18M966 672v11" stroke="#fff"/>
          <path d="M556 646l-5-8M560 610l8-3M588 610l6 8M610 701l8 6M648 702l-7 6M650 676l-8-8" stroke="#aaa" stroke-width="3"/>
        </g>
        <circle cx="1090" cy="315" r="5" fill="#5c5c5c" stroke="#bdbdbd" stroke-width="2"/>
        <path d="M60 843l18 24-9-5v25H52v-25l-10 5z" fill="#032603" stroke="#008000"/>
        <path d="M73 890h26l-5-9 23 19-23 18 5-9H73z" fill="#200303" stroke="#800000"/>
        <circle cx="60" cy="900" r="9" fill="#04041c" stroke="#16167c"/>
        <circle cx="60" cy="900" r="2.500" fill="#2525e0"/>
        <text x="60" y="878" fill="#648064">Y</text>
        <text transform="translate(82 900) rotate(90)" fill="#8a6464">X</text>
      </svg>
    `;
  }
}
customElements.define('roadway-drawing', RoadwayDrawing);

class SelectionDialog extends HTMLElement {
  connectedCallback() {
    const row = icons => icons.map((n, i) => `<button type="button" aria-label="${n}" class="${i ? '' : 'on'}"><svg-icon name="${n}"></svg-icon></button>`).join('');
    this.attachShadow({mode: 'open'}).innerHTML = `
      <style>
        :host { display: block; box-sizing: border-box; background: #f0f0f0; color: #000; font-family: "Open Sans", sans-serif; }
        header { display: flex; align-items: center; height: 30px; padding: 0 2px 0 8px; background: #fff; }
        h2 { flex: 1; margin: 0 0 0 5px; font-size: 12px; font-weight: normal; }
        header button { width: 45px; }
        button { display: flex; align-items: center; justify-content: center; padding: 0; border: 0; background: none; }
        section { display: flex; align-items: center; padding: 14px 13px 0; height: 26px; gap: 25px; }
        section + section { padding-top: 16px; }
        .set { display: flex; gap: 1px; padding: 2px; border: 1px solid #a0a0a0; border-right-color: #fff; border-bottom-color: #fff; }
        .set button { width: 20px; height: 20px; }
        .set .on { background: #7fb4e2; box-shadow: inset 0 0 0 1px #2e6cc4; }
        .more { margin: 14px 0 0 auto; }
      </style>
      <header>
        <svg-icon name="wrench"></svg-icon>
        <h2>Element Selection</h2>
        <button type="button" aria-label="Minimize"><svg width="10" height="10"><path d="M0 5.500h10" stroke="#000"/></svg></button>
        <button type="button" aria-label="Maximize" disabled><svg width="10" height="10"><rect x=".5" y=".5" width="9" height="9" fill="none" stroke="#c4c4c4"/></svg></button>
        <button type="button" aria-label="Close"><svg width="10" height="10"><path d="M0 0l10 10M10 0L0 10" stroke="#000" stroke-width="1.200"/></svg></button>
      </header>
      <section>
        <div class="set">${row(['individual', 'block', 'shape', 'circle', 'line'])}</div>
        <button type="button" aria-label="Clear selection"><svg-icon name="deselect" size="24"></svg-icon></button>
      </section>
      <section>
        <div class="set">${row(['newsel', 'plus', 'minus', 'invert', 'circledots'])}</div>
        <button type="button" aria-label="Select all" disabled><svg-icon name="selectall" size="24"></svg-icon></button>
        <button type="button" class="more" aria-label="More"><svg width="10" height="6"><path d="M0 0h9l-4 5z"/></svg></button>
      </section>
    `;
  }
}
customElements.define('selection-dialog', SelectionDialog);

// one strip of the docked bar, with a dotted grip at its left end
class ToolDock extends HTMLElement {
  connectedCallback() {
    this.attachShadow({mode: 'open'}).innerHTML = `
      <style>
        :host { display: flex; align-items: center; height: 33px; padding: 0 3px 0 2px; background: #f0f0f0; border-radius: 0 0 3px 3px; }
        i { width: 2px; height: 20px; margin-right: 3px; background: repeating-linear-gradient(#9a9a9a 0 2px, transparent 2px 4px); }
      </style>
      <i></i><slot></slot>
    `;
  }
}
customElements.define('tool-dock', ToolDock);

class BottomBar extends HTMLElement {
  connectedCallback() {
    const tool = (name, on) => `<tool-button size="24" icon="${name}" ${on ? 'on' : ''}></tool-button>`;
    this.attachShadow({mode: 'open'}).innerHTML = `
      <style>
        :host { display: flex; gap: 3px; height: 34px; background: #d5d5d5; font-family: "Open Sans", sans-serif; }
        .nav { display: flex; padding-left: 1px; }
        .nav tool-button { width: 43px; }
        combo-box { width: 168px; height: 24px; margin-right: 2px; }
        .sep { width: 1px; height: 27px; margin: 0 3px 0 2px; background: #a0a0a0; }
        .views { display: flex; }
        .views button {
          width: 18px; height: 24px; padding: 0; background: #f0f0f0; color: #111; font: inherit;
          border: 1px solid #a0a0a0; border-right-color: #222; border-left-color: #fff;
        }
        .views .on { background: #7fb4e2; border: 1px solid #2e6cc4; border-right-color: #222; box-shadow: inset 0 0 0 1px #2e6cc4; }
      </style>
      <tool-dock>
        <div class="nav">
          <tool-button size="24" icon="back" menu></tool-button>
          <tool-button size="24" icon="forward" menu></tool-button>
          <tool-button size="24" icon="disc" menu></tool-button>
        </div>
        <combo-box icon="workset" label="View group" value="Default"></combo-box>
        <span class="sep"></span>
        ${tool('windows')}
        <span class="sep"></span>
        <div class="views">${[1, 2, 3, 4, 5, 6, 7, 8].map(n => `<button type="button" class="${n < 3 ? 'on' : ''}">${n}</button>`).join('')}</div>
      </tool-dock>
      <tool-dock>
        ${['snapbolt', 'snaphist', 'snapnote', 'snapline'].map(n => tool(n, true)).join('')}${tool('snaptext')}
      </tool-dock>
      <tool-dock>
        ${tool('bigx', true)}<span class="sep"></span>
        ${tool('near')}${tool('keypt', true)}
        ${['midpt', 'center', 'origin', 'bisector', 'intersect', 'tangent', 'perp'].map(n => tool(n)).join('')}
        <span class="sep"></span>${tool('multisnap')}
      </tool-dock>
      <tool-dock>
        ${tool('mesh')}${tool('gridall', true)}${tool('gridcol')}${tool('gridone')}
      </tool-dock>
    `;
  }
}
customElements.define('bottom-bar', BottomBar);

class StatusBar extends HTMLElement {
  connectedCallback() {
    const cells = ['', '', '', 'scroll', 'wrench', '', 'spring', '', 'panel', 'globe'];
    this.attachShadow({mode: 'open'}).innerHTML = `
      <style>
        :host {
          display: flex; align-items: center; height: 32px; padding-right: 3px; background: #f0f0f0; color: #000;
          font-family: "Open Sans", sans-serif; white-space: nowrap;
        }
        .prompt { width: 279px; margin: 0 8px 0 3px; font-family: "Noto Sans", sans-serif; }
        .message { font-size: 13px; }
        .grip { width: 2px; height: 22px; margin-right: 3px; background: repeating-linear-gradient(#9a9a9a 0 2px, transparent 2px 4px); }
        .edge { width: 1px; height: 32px; background: #a0a0a0; }
        .line { width: 1px; height: 26px; background: #555; }
        .mark { align-self: flex-start; margin: 4px 0 0 26px; border: 3px solid transparent; border-top: 0; border-bottom: 3px solid #000; }
        .message { flex: 1; margin-left: 2px; }
        .snap { width: 34px; text-align: center; margin-left: 1px; }
        .locks { width: 27px; box-sizing: border-box; padding-left: 7px; }
        .model { width: 153px; padding-left: 8px; box-sizing: border-box; border-left: 1px solid #e2e2e2; }
        .blank { width: 132px; }
        .cell { display: flex; align-items: center; justify-content: center; width: 34px; height: 28px; box-sizing: border-box; border-left: 1px solid #e0e0e0; }
        .blank + .line + .cell { border-left-color: transparent; }
      </style>
      <span class="prompt">Element Selection &gt; Identify element to add to s</span>
      <span class="grip"></span><span class="edge"></span>
      <span class="mark"></span><span class="line"></span>
      <span class="message">SMARTFEATURE loaded.</span>
      <span class="line"></span>
      <span class="snap"><svg-icon name="snapmode" size="30"></svg-icon></span>
      <span class="locks"><svg-icon name="padlock"></svg-icon></span>
      <span class="model">Default</span>
      <span class="line"></span><span class="blank"></span><span class="line"></span>
      ${cells.map(c => `<span class="cell">${c ? `<svg-icon name="${c}"></svg-icon>` : ''}</span>`).join('')}
    `;
  }
}
customElements.define('status-bar', StatusBar);

class BridgeApp extends HTMLElement {
  connectedCallback() {
    this.attachShadow({mode: 'open'}).innerHTML = `
      <style>
        :host { display: flex; flex-direction: column; height: 100vh; box-sizing: border-box; border: 1px solid #0078d0; border-width: 1px 1px 0 0; }
        .head { border-left: 1px solid #0078d0; }
        main { position: relative; flex: 1; min-height: 0; margin-right: 1px; }
        roadway-drawing { height: 100%; }
        /* floats over the drawing */
        selection-dialog { position: absolute; top: 21px; right: 82px; width: 280px; height: 124px; }
      </style>
      <div class="head">
        <title-bar></title-bar>
        <ribbon-tabs></ribbon-tabs>
        <home-ribbon></home-ribbon>
      </div>
      <view-title>View 1 - Top, Default</view-title>
      <view-tools></view-tools>
      <main>
        <roadway-drawing></roadway-drawing>
        <selection-dialog></selection-dialog>
      </main>
      <bottom-bar></bottom-bar>
      <status-bar></status-bar>
    `;
  }
}
customElements.define('bridge-app', BridgeApp);
</script>
</body>
</html>
